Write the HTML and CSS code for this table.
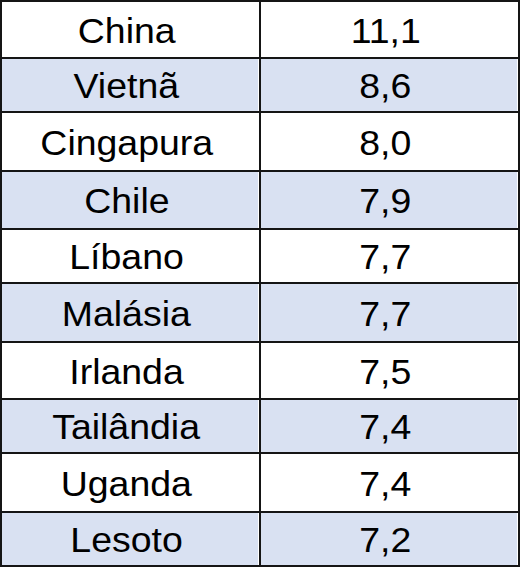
FILE: index.html
```html
<!doctype html>
<html>
<head>
  <meta charset="utf-8" />
  <title>Crescimento</title>
  <link rel="stylesheet" href="styles.css">
</head>
<body>
  <div class="grid">
    <div class="cell name"><span>China</span></div>
    <div class="cell value"><span>11,1</span></div>
    <div class="cell name alt"><span>Vietnã</span></div>
    <div class="cell value alt"><span>8,6</span></div>
    <div class="cell name"><span>Cingapura</span></div>
    <div class="cell value"><span>8,0</span></div>
    <div class="cell name alt"><span>Chile</span></div>
    <div class="cell value alt"><span>7,9</span></div>
    <div class="cell name"><span>Líbano</span></div>
    <div class="cell value"><span>7,7</span></div>
    <div class="cell name alt"><span>Malásia</span></div>
    <div class="cell value alt"><span>7,7</span></div>
    <div class="cell name"><span>Irlanda</span></div>
    <div class="cell value"><span>7,5</span></div>
    <div class="cell name alt"><span>Tailândia</span></div>
    <div class="cell value alt"><span>7,4</span></div>
    <div class="cell name"><span>Uganda</span></div>
    <div class="cell value"><span>7,4</span></div>
    <div class="cell name alt"><span>Lesoto</span></div>
    <div class="cell value alt"><span>7,2</span></div>
  </div>
</body>
</html>
```

FILE: styles.css
```css
body {
  margin: 0;
  background: #fff;
  font-family: 'Liberation Sans', Arial, sans-serif;
  color: #000;
}
.grid {
  width: 520px;
  box-sizing: border-box;
  display: grid;
  grid-template-columns: 257px 257px;
  grid-template-rows: 55px 52px 57px 56px 52px 57px 55px 52px 57px 52px;
  gap: 2px;
  padding: 2px;
  background: #151515;
}
.cell {
  background: #fff;
  display: flex;
  align-items: center;
  justify-content: center;
  font-size: 35px;
  padding-top: 2px;
}
.cell span {
  display: inline-block;
  transform: scaleX(1.07);
}
.name {
  padding-right: 8px;
}
.value {
  padding-right: 8px;
}
.alt {
  background: #d9e1f2;
  box-shadow: inset -1px 0 0 #fff;
}
```
